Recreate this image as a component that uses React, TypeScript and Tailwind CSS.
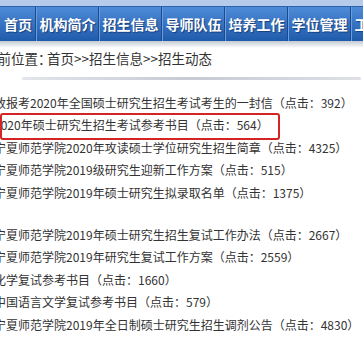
import React from "react";

const navItems = ["首页", "机构简介", "招生信息", "导师队伍", "培养工作", "学位管理", "工作动态"];

type Item = {
  title: string;
  hits: number;
  marked?: boolean;
};

const firstGroup: Item[] = [
  { title: "致报考2020年全国硕士研究生招生考试考生的一封信", hits: 392 },
  { title: "2020年硕士研究生招生考试参考书目", hits: 564, marked: true },
  { title: "宁夏师范学院2020年攻读硕士学位研究生招生简章", hits: 4325 },
  { title: "宁夏师范学院2019级研究生迎新工作方案", hits: 515 },
  { title: "宁夏师范学院2019年硕士研究生拟录取名单", hits: 1375 },
];

const secondGroup: Item[] = [
  { title: "宁夏师范学院2019年硕士研究生招生复试工作办法", hits: 2667 },
  { title: "宁夏师范学院2019年研究生复试工作方案", hits: 2559 },
  { title: "化学复试参考书目", hits: 1660 },
  { title: "中国语言文学复试参考书目", hits: 579 },
  { title: "宁夏师范学院2019年全日制硕士研究生招生调剂公告", hits: 4830 },
];

function Row({ item }: { item: Item }) {
  return (
    <div className="relative h-[22.5px] leading-[22.5px] whitespace-nowrap">
      <span>{item.title}</span>
      <span>（点击：{item.hits}）</span>
      {item.marked && (
        <div className="pointer-events-none absolute left-[6px] -top-[1px] -bottom-[3px] w-[280px] rounded-[3px] border-2 border-[#d42424]" />
      )}
    </div>
  );
}

export default function App() {
  return (
    <div className="h-[337px] w-full overflow-hidden bg-white font-['Noto_Sans_CJK_SC',sans-serif] text-[#333]">
      <div className="h-[6px] bg-[#b6cbea]" />
      <div className="h-[1px] bg-[#2d63ad]" />
      <nav className="flex h-[34px] items-stretch whitespace-nowrap bg-linear-to-b from-[#4e8bd7] to-[#1f5bab]">
        {navItems.map((name, i) => (
          <React.Fragment key={name}>
            <div
              className={
                i === 0
                  ? "flex shrink-0 items-center pl-[4px] pr-[3px] text-[14px] font-bold text-white [text-shadow:1px_1px_1px_#163f7c]"
                  : "flex shrink-0 items-center px-[2.5px] text-[14px] font-bold text-white [text-shadow:1px_1px_1px_#163f7c]"
              }
            >
              {name}
            </div>
            <div className="flex shrink-0">
              <div className="w-[1px] bg-[#1a4a8c]" />
              <div className="w-[1px] bg-[#6a9ee0]" />
            </div>
          </React.Fragment>
        ))}
      </nav>
      <div className="h-[7px] bg-linear-to-b from-[#c3cad3] to-white" />

      <div className="-ml-[16px] flex h-[20px] items-center whitespace-nowrap text-[13.5px]">
        <span className="w-[63px] shrink-0">当前位置：</span>
        <span>首页&gt;&gt;招生信息&gt;&gt;招生动态</span>
      </div>

      <div className="mt-[9px] ml-[22px] mr-[2px] h-[3px] rounded-full bg-linear-to-r from-[#e2e5ea] via-[#c6cbd3] to-[#dde0e5]" />

      <div className="-ml-[6px] mt-[11.75px] text-[12px]">
        {firstGroup.map((item) => (
          <Row key={item.title} item={item} />
        ))}
        <div className="h-[19.5px]" />
        {secondGroup.map((item) => (
          <Row key={item.title} item={item} />
        ))}
      </div>
    </div>
  );
}
